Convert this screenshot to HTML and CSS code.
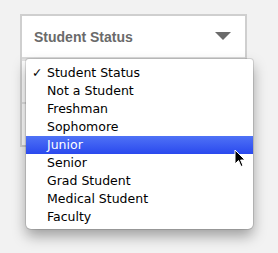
FILE: index.html
```html
<!DOCTYPE html>
<html>
<head>
<meta charset="utf-8">
<link rel="stylesheet" href="styles.css">
</head>
<body>
<div class="form">
  <div class="field select">
    <span class="label">Student Status</span>
    <svg class="arrow" width="16" height="8" viewBox="0 0 16 8"><path d="M0 0 H16 L8 8 Z" fill="#6b6b6b"/></svg>
  </div>
  <div class="field"></div>
  <div class="field"></div>
</div>
<ul class="menu">
  <li><span class="check">✓</span>Student Status</li>
  <li>Not a Student</li>
  <li>Freshman</li>
  <li>Sophomore</li>
  <li class="active">Junior</li>
  <li>Senior</li>
  <li>Grad Student</li>
  <li>Medical Student</li>
  <li>Faculty</li>
</ul>
<svg class="cursor" width="12" height="19" viewBox="0 0 12 19"><path d="M1 1 L1 15 L4.5 11.5 L7 17.5 L9 16.6 L6.6 11 L11 11 Z" fill="#000" stroke="#fff" stroke-width="1"/></svg>
</body>
</html>
```

FILE: styles.css
```css
html, body {
  margin: 0;
  padding: 0;
  background: #f2f2f2;
  width: 278px;
  height: 253px;
  overflow: hidden;
}
body {
  position: relative;
  padding: 14px 0 0 20px;
  box-sizing: border-box;
}
.form {
  width: 227px;
  border: 2px solid #cfcfcf;
  background: #fff;
  box-sizing: border-box;
}
.field {
  height: 41px;
  border-top: 2px solid #e4e4e4;
}
.field:first-child { border-top: none; }
.select {
  display: flex;
  align-items: center;
  justify-content: space-between;
  padding: 0 14px 0 12px;
  border-bottom: 2px solid #dadada;
}
.label {
  font-family: "Liberation Sans", Arial, sans-serif;
  font-weight: bold;
  font-size: 14px;
  color: #6a6a6a;
}
.arrow { display: block; margin-top: -2px; }
.menu {
  position: absolute;
  left: 26px;
  top: 59px;
  width: 227px;
  height: 170px;
  margin: 0;
  padding: 5px 0 0 0;
  box-sizing: border-box;
  list-style: none;
  background: #fff;
  border-radius: 3px 3px 5px 5px;
  box-shadow: 0 0 0 1px rgba(0,0,0,0.12), 0 7px 14px rgba(0,0,0,0.35);
  font-family: "DejaVu Sans", "Lucida Grande", sans-serif;
  font-size: 12.5px;
  color: #000;
}
.menu li {
  height: 18px;
  line-height: 18px;
  padding-left: 21px;
  position: relative;
}
.menu .check {
  position: absolute;
  left: 6px;
  top: 0;
  font-weight: bold;
}
.menu .active {
  background: linear-gradient(#4f72f6, #2a49ee);
  color: #fff;
}
.cursor {
  position: absolute;
  left: 234px;
  top: 149px;
}
```
